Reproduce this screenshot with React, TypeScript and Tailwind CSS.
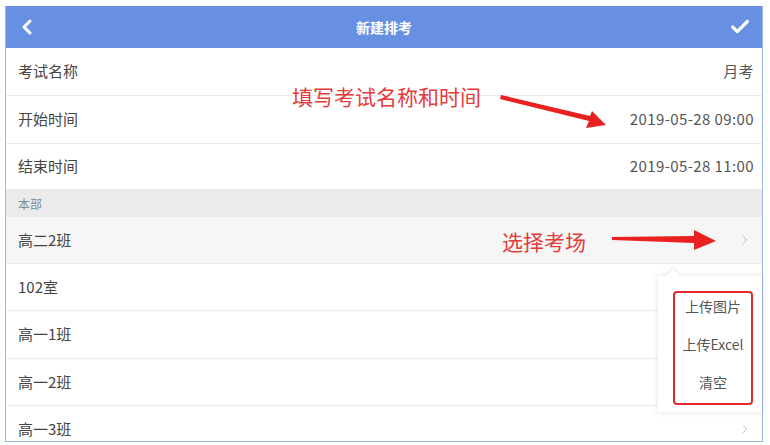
import { ChevronLeft, Check, ChevronRight } from "lucide-react";

type Row = { label: string; value?: string; arrow?: boolean; active?: boolean; h: string };

const topRows: Row[] = [
  { label: "考试名称", value: "月考", h: "h-[48px]" },
  { label: "开始时间", value: "2019-05-28 09:00", h: "h-[48px]" },
  { label: "结束时间", value: "2019-05-28 11:00", h: "h-[46px]" },
];

const roomRows: Row[] = [
  { label: "高二2班", arrow: true, active: true, h: "h-[47px]" },
  { label: "102室", h: "h-[47px]" },
  { label: "高一1班", h: "h-[48px]" },
  { label: "高一2班", h: "h-[47px]" },
  { label: "高一3班", arrow: true, h: "h-[47px]" },
];

const font = { fontFamily: '"Noto Sans CJK SC", "Noto Sans", sans-serif' };

function ListRow({ row }: { row: Row }) {
  return (
    <div
      className={
        "flex shrink-0 items-center justify-between border-b border-[#ececec] pl-[12px] pr-[8px] text-[15px] text-[#444] " +
        row.h +
        (row.active ? " bg-[#f6f6f6]" : " bg-white")
      }
    >
      <span>{row.label}</span>
      {row.value ? <span className="tracking-[0.4px] text-[#555]">{row.value}</span> : null}
      {row.arrow ? <ChevronRight size={14} strokeWidth={1.5} className="mr-[2px] text-[#b5b5b5]" /> : null}
    </div>
  );
}

export default function App() {
  return (
    <div className="relative h-[445px] w-[770px] overflow-hidden bg-white" style={font}>
      <div className="ml-[5px] mt-[6px] flex h-[436px] w-[758px] flex-col overflow-hidden border-x border-b border-[#9fb7e6]">
        {/* Header */}
        <div className="flex h-[42px] shrink-0 items-center justify-between bg-[#6790e2] px-[9px] text-white">
          <ChevronLeft size={24} strokeWidth={3} />
          <span className="text-[14px] font-bold">新建排考</span>
          <Check size={22} strokeWidth={3.5} className="mr-[2px]" />
        </div>

        {topRows.map((r) => (
          <ListRow key={r.label} row={r} />
        ))}

        <div className="flex h-[27px] shrink-0 items-center bg-[#ebebeb] pl-[12px] text-[12px] text-[#7c8f98]">本部</div>

        {roomRows.map((r) => (
          <ListRow key={r.label} row={r} />
        ))}
      </div>

      {/* Action popover */}
      <div className="absolute left-[658px] top-[276px] flex h-[136px] w-[104px] flex-col bg-white shadow-[0_0_6px_rgba(0,0,0,0.12)]">
        <div className="absolute -top-[5px] left-[10px] h-[10px] w-[10px] rotate-45 bg-white shadow-[-2px_-2px_3px_rgba(0,0,0,0.06)]" />
        <div className="relative ml-[15px] mt-[15px] flex h-[114px] w-[80px] flex-col items-center gap-[18px] rounded-[4px] border-[2.5px] border-[#e52a2a] pt-[3px] text-[14px] leading-[20px] text-[#555]">
          <span>上传图片</span>
          <span>上传Excel</span>
          <span>清空</span>
        </div>
      </div>

      {/* Annotations */}
      <span className="absolute left-[292px] top-[82px] text-[21px] leading-[28px] text-[#e43b3b]">填写考试名称和时间</span>
      <span className="absolute left-[502px] top-[227px] text-[21px] leading-[28px] text-[#e43b3b]">选择考场</span>
      <svg className="absolute left-0 top-0" width="770" height="445">
        <polygon points="501,95 590,116 592,111 606,125 586,128 589,121 500,99" fill="#ea2121" />
        <polygon points="612,237 694,236 694,230 716,241 694,250 694,243 612,240" fill="#ea2121" />
      </svg>
    </div>
  );
}
